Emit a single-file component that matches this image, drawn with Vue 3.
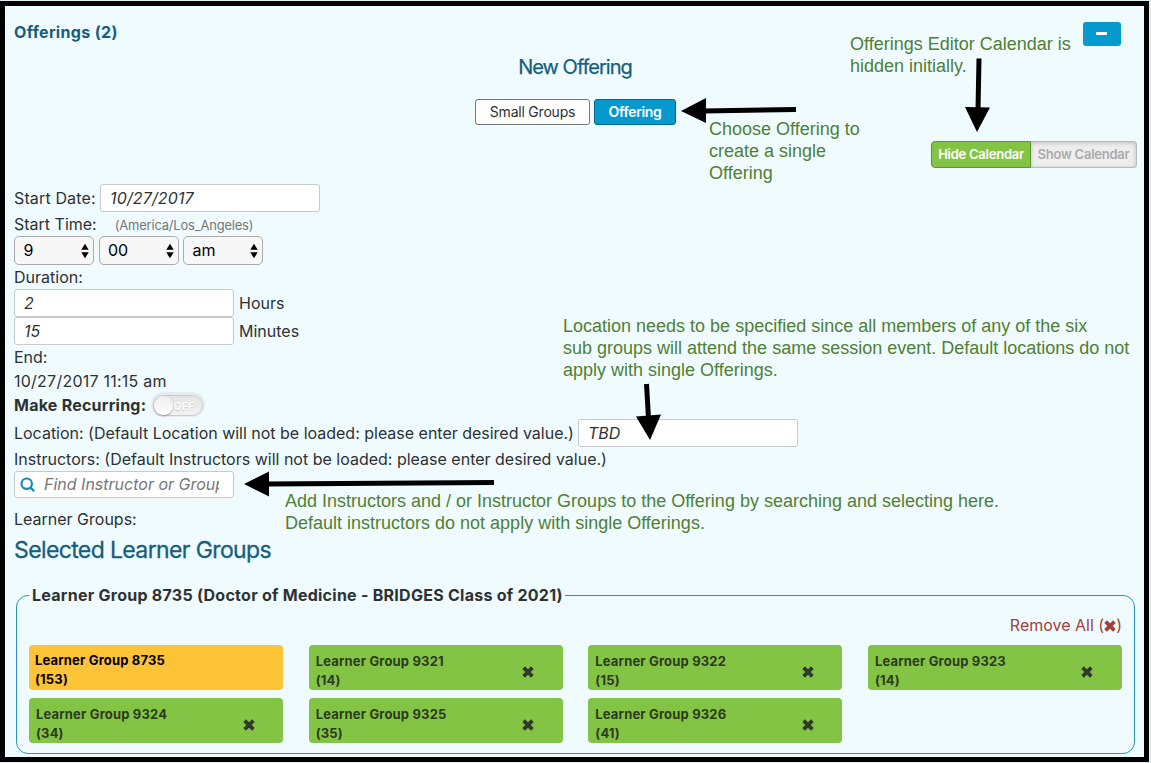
<script setup>
const learners = [
  { id: 8735, n: 153, top: true },
  { id: 9321, n: 14 },
  { id: 9322, n: 15 },
  { id: 9323, n: 14 },
  { id: 9324, n: 34 },
  { id: 9325, n: 35 },
  { id: 9326, n: 41 }
]
const times = ['9', '00', 'am']
const cross = 'M2.9 0.3 6 3.3 9.1 0.3 11.7 2.9 8.7 6 11.7 9.1 9.1 11.7 6 8.7 2.9 11.7 0.3 9.1 3.3 6 0.3 2.9Z'
</script>

<template>
  <div class="page">
    <main class="frame">
      <header class="head">
        <span class="t head-title">Offerings (2)</span>
        <button class="collapse" aria-label="Collapse"><i></i></button>
      </header>
      <h2 class="new-title"><span class="t">New Offering</span></h2>
      <div class="kinds">
        <button class="kind"><span class="t">Small Groups</span></button>
        <button class="kind active"><span class="t">Offering</span></button>
      </div>
      <div class="calendar-row">
        <div class="toggle">
          <span class="on"><span class="t">Hide Calendar</span></span>
          <span class="off"><span class="t">Show Calendar</span></span>
        </div>
      </div>
      <div class="row r28"><span class="t wide">Start Date:</span><div class="field date"><span class="t wide">10/27/2017</span></div></div>
      <div class="row r24"><span class="t">Start Time:</span><span class="t zone">(America/Los_Angeles)</span></div>
      <div class="row selects">
        <div v-for="v in times" :key="v" class="select"><span class="t">{{ v }}</span>
          <svg width="8" height="16" viewBox="0 0 8 16"><path d="M0.3 6.7 4 0.7 7.7 6.7ZM0.3 9.3 4 15.3 7.7 9.3Z" /></svg>
        </div>
      </div>
      <div class="row r24"><span class="t">Duration:</span></div>
      <div class="row r28"><div class="field"><span class="t">2</span></div><span class="t unit">Hours</span></div>
      <div class="row r28"><div class="field"><span class="t">15</span></div><span class="t unit">Minutes</span></div>
      <div class="row r24"><span class="t">End:</span></div>
      <div class="row r24"><span class="t end">10/27/2017 11:15 am</span></div>
      <div class="row recurring"><span class="t bold">Make Recurring:</span><div class="switch"><span>OFF</span><i></i></div></div>
      <div class="row r28"><span class="t loc">Location: (Default Location will not be loaded: please enter desired value.)</span><div class="field place"><span class="t">TBD</span></div></div>
      <div class="row r24"><span class="t">Instructors: (Default Instructors will not be loaded: please enter desired value.)</span></div>
      <div class="field search">
        <svg width="16" height="16" viewBox="0 0 16 16"><circle cx="6.7" cy="6.7" r="5.2" /><path d="M10.6 10.6 14.2 14.2" /></svg>
        <div class="clip"><span class="t">Find Instructor or Group</span></div>
      </div>
      <div class="row learner-label"><span class="t">Learner Groups:</span></div>
      <h2 class="selected"><span class="t">Selected Learner Groups</span></h2>
      <section class="group">
        <div class="legend"><span class="t">Learner Group 8735 (Doctor of Medicine - BRIDGES Class of 2021)</span></div>
        <div class="remove"><span class="t">Remove All (<svg width="12" height="12" viewBox="0 0 12 12"><path :d="cross" /></svg>)</span></div>
        <div class="cards">
          <div v-for="l in learners" :key="l.id" class="card" :class="{ parent: l.top }">
            <div class="card-text"><span class="t">Learner Group {{ l.id }}</span><br><span class="t">({{ l.n }})</span></div>
            <svg v-if="!l.top" width="12" height="12" viewBox="0 0 12 12"><path :d="cross" /></svg>
          </div>
        </div>
      </section>
    </main>
    <p class="note n1">Offerings Editor Calendar is<br>hidden initially.</p>
    <p class="note n2">Choose Offering to<br>create a single<br>Offering</p>
    <p class="note n3">Location needs to be specified since all members of any of the six<br>sub groups will attend the same session event. Default locations do not<br>apply with single Offerings.</p>
    <p class="note n4">Add Instructors and / or Instructor Groups to the Offering by searching and selecting here.<br>Default instructors do not apply with single Offerings.</p>
    <svg class="arrows" width="1151" height="763" viewBox="0 0 1151 763">
      <path class="shaft" d="M979 58.5 978 110M796 109.5 703 111M646.5 384 648.5 418M494 482.5 266 484" />
      <path d="M965 107 990 107.5 977 132ZM681 111 706 98V123ZM636 416.5 661 414.5 650 440ZM244 484 269 471.500V496.500Z" />
    </svg>
  </div>
</template>

<style>
body { margin: 0; }
</style>

<style scoped>
* { box-sizing: border-box; }
.page { position: relative; width: 1151px; height: 763px; padding: 1px 2px 1px 0; overflow: hidden; background: #e0eef1; color: #2e3133; font-family: Inter, "Liberation Sans", sans-serif; font-size: 16px; line-height: 24px; }
.frame { height: 761px; border: 5px solid #000; background: #effbff; padding: 0 9px; }
h2, p { margin: 0; font-weight: 400; }
.t, .note { white-space: nowrap; }
.wide { letter-spacing: 0.14px; }
button { font: inherit; padding: 0; }
.head { display: flex; justify-content: space-between; align-items: center; height: 52px; padding-right: 14px; }
.head-title { font-weight: 700; color: #175e7c; letter-spacing: 0.33px; }
.collapse { width: 38px; height: 24px; border: 0; border-radius: 3px; background: #0599cd; display: flex; align-items: center; justify-content: center; margin-top: 4px; }
.collapse i { width: 11px; height: 3px; margin: 0 1px 1px 0; border-radius: 1px; background: #fff; }
.new-title { height: 41px; text-align: center; font-size: 20px; line-height: 18px; color: #175e7c; letter-spacing: -1px; padding-left: 1px; -webkit-text-stroke: 0.25px #175e7c; }
.kinds { display: flex; justify-content: center; gap: 4px; height: 42px; padding-left: 2px; }
.kind { width: 115px; height: 26px; border: 1px solid #777; border-radius: 3px; background: #fff; color: #2e3133; font-size: 14px; letter-spacing: -0.22px; }
.kind.active { width: 82px; border-color: #08698c; background: #0599cd; color: #fff; font-weight: 600; letter-spacing: -0.33px; }
.calendar-row { display: flex; justify-content: flex-end; height: 43px; margin-right: -2px; }
.toggle { display: flex; width: 206px; height: 27px; font-size: 13px; font-weight: 600; line-height: 25px; text-align: center; letter-spacing: -0.25px; }
.on { width: 100px; border: 1px solid #5c9632; border-radius: 4px 0 0 4px; background: #84c444; color: #fff; }
.off { width: 106px; border: 1px solid #b8babb; border-left: 0; border-radius: 0 4px 4px 0; background: #eee; color: #aaa; box-shadow: inset 0 1px 4px #bbb; }
.row { display: flex; align-items: center; }
.r28 { height: 28px; }
.r24 { height: 24px; }
.field { width: 220px; height: 28px; padding: 0 9px; border: 1px solid #c6cacc; border-radius: 3px; background: #fff; font-style: italic; line-height: 26px; flex: none; }
.date { margin-left: auto; margin-right: 815px; }
.zone { font-size: 13px; color: #777; margin-left: 18px; padding-top: 1px; letter-spacing: -0.21px; }
.selects { height: 29px; gap: 4.5px; }
.select { display: flex; align-items: center; justify-content: space-between; width: 80px; height: 29px; padding: 0 4px 0 8.500px; border: 1px solid #aaa; border-radius: 5px; background: #f7f7f7; color: #000; }
.select .t { margin-top: -2px; }
.unit { margin-left: 5px; }
.end { letter-spacing: 0.24px; }
.recurring { height: 26px; padding-bottom: 2px; }
.bold { font-weight: 700; letter-spacing: 0.24px; }
.switch { position: relative; width: 50px; height: 21px; margin: 1px 0 0 7px; border-radius: 11px; background: linear-gradient(#e4e4e4, #f3f3f3); border: 1px solid #c8caca; box-shadow: 0 -1px 0 2px #e6ecee; }
.switch i { position: absolute; left: 0; top: 0; width: 19px; height: 19px; border-radius: 10px; background: linear-gradient(#eee, #fff); box-shadow: 0 1px 2px #999; }
.switch span { position: absolute; left: 19px; top: 0; font-size: 11px; line-height: 20px; color: #fff; font-weight: 600; text-shadow: 0 1px 1px #ccc; }
.loc { letter-spacing: -0.01px; }
.place { margin-left: auto; margin-right: 337px; }
.search { display: flex; align-items: center; height: 27px; padding: 0 14px 0 5px; color: #777; }
.search svg { fill: none; stroke: #168db4; stroke-width: 2.2; flex: none; margin-right: 8px; }
.clip { overflow: hidden; margin-top: -1px; }
.learner-label { height: 40px; padding-top: 2px; }
.selected { height: 44px; font-size: 23px; line-height: 24px; color: #175e7c; letter-spacing: -0.62px; -webkit-text-stroke: 0.3px #175e7c; }
.group { height: 159px; margin: 13px 0 0 2px; border: 1px solid #2c94aa; border-radius: 12px; padding: 0 12px; width: 1119px; }
.legend { width: max-content; height: 24px; margin-top: -13px; padding: 0 2px 0 3px; background: #effbff; font-weight: 700; letter-spacing: 0.26px; }
.remove { display: flex; justify-content: flex-end; margin-top: 6px; color: #a23f3a; }
.remove svg { fill: #a23f3a; vertical-align: -1px; }
.cards { display: grid; grid-template-columns: repeat(4, 254px); justify-content: space-between; gap: 8px 0; margin-top: 8px; }
.card { display: flex; justify-content: space-between; align-items: center; height: 45px; padding: 8px 28.500px 0 7px; border-radius: 4px; background: #84c444; color: #2c3a1e; font-size: 13px; font-weight: 700; line-height: 19px; letter-spacing: 0.17px; }
.card-text { margin-top: -1px; }
.parent { padding: 6px 7px 0 6px; background: #ffc338; color: #000; }
.card svg { fill: #2f3b2a; }
.note { position: absolute; font-family: "Liberation Sans", sans-serif; font-size: 18px; line-height: 22px; color: #4f8034; }
.n1 { left: 850px; top: 33px; }
.n2 { left: 709px; top: 118px; }
.n3 { left: 563px; top: 315px; }
.n4 { left: 285px; top: 490px; }
.arrows { position: absolute; left: 0; top: 0; }
.shaft { fill: none; stroke: #000; stroke-width: 5; }
</style>
